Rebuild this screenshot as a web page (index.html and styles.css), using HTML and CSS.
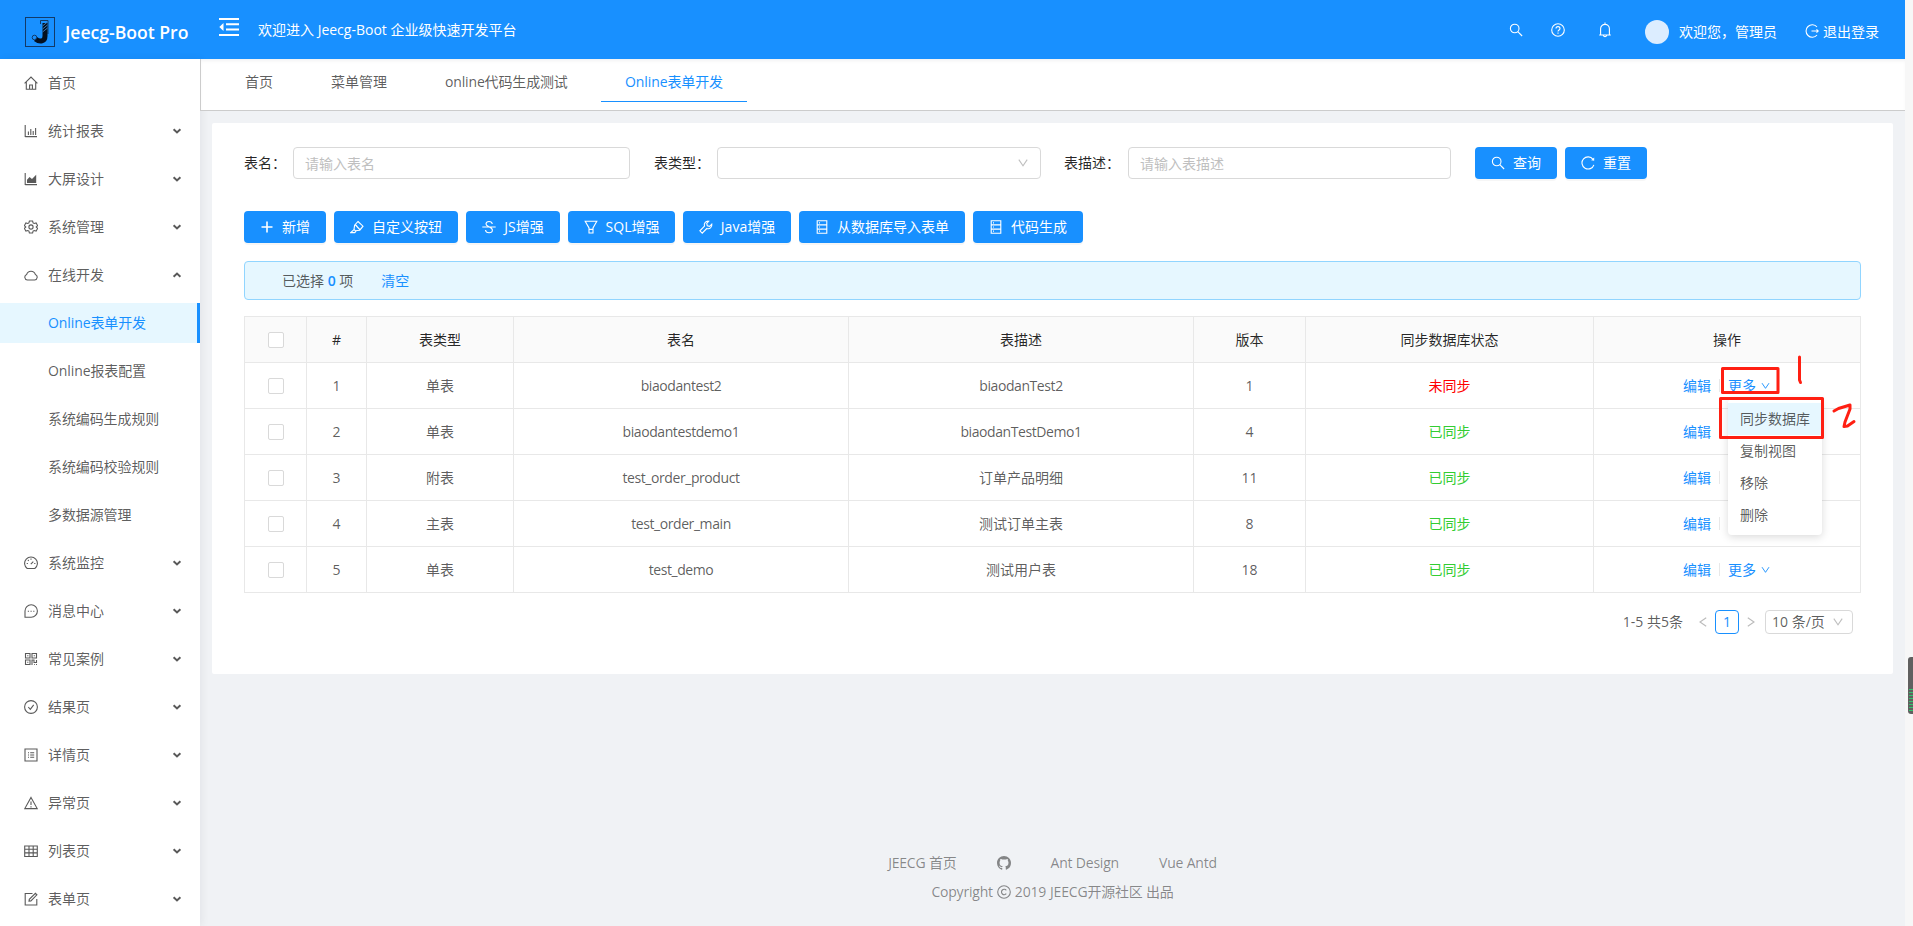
FILE: index.html
```html
<!DOCTYPE html>
<html lang="zh-CN">
<head>
    <meta charset="UTF-8">
    <meta name="viewport" content="width=device-width, initial-scale=1.0">
    <title>Online表单开发</title>
    <link rel="stylesheet" href="styles.css">
</head>
<body>
    <!-- icons -->
    <svg class="sprite">
        <symbol id="home" viewBox="0 0 14 14"><path d="M.6 7.4 7 1l6.4 6.4M2.3 6v7.3h9.4V6M5.6 13.2V9h2.8v4.2"/></symbol>
        <symbol id="bar" viewBox="0 0 14 14"><path d="M1.2 1v12M1.2 12.6H13M4.4 11V7.5M6.8 11V5M9.2 11V7M11.6 11V4"/></symbol>
        <symbol id="area" viewBox="0 0 14 14"><path d="M1.2 1v12M1.2 12.6H13"/><path class="solid" d="M3 11V7.8L5.6 5l2.4 2 4.2-4.2V11z"/></symbol>
        <symbol id="gear" viewBox="0 0 14 14"><path d="M5.4 1h3.2l.5 1.9 1.1.6 1.9-.5 1.5 2.6L12.200 7l1.4 1.4-1.500 2.600-1.900-.5-1.100.6-.5 1.900H5.400l-.5-1.900-1.100-.6-1.900.5L.4 8.400 1.800 7 .4 5.600 1.900 3l1.900.5 1.100-.6z"/><circle cx="7" cy="7" r="2.100"/></symbol>
        <symbol id="cloud" viewBox="0 0 14 14"><path d="M3.400 12a2.900 2.900 0 0 1-.7-5.600 4.500 4.500 0 0 1 8.600 0 2.900 2.900 0 0 1-.7 5.600z"/></symbol>
        <symbol id="dash" viewBox="0 0 14 14"><path d="M3.200 12.500a6.400 6.400 0 1 1 7.600 0zM6.800 8.200l2.500-2.600M7 2.600v1.200M3.900 4l.8.8M2.700 7.500h1.200M10.200 7.500h1.200"/></symbol>
        <symbol id="message" viewBox="0 0 14 14"><path d="M1 13V7a6.200 6.200 0 1 1 6.200 6.200H1zM3.800 7.200h1.200M6.500 7.200h1.200M9.200 7.200h1.200"/></symbol>
        <symbol id="qrcode" viewBox="0 0 14 14"><path d="M1.500 1.500h4.500v4.500h-4.500zM8 1.500h4.500v4.500H8zM1.500 8h4.500v4.500h-4.500zM8 13V8h2v2.500h2.500V8M10 12.500h.8M12 12.500h1M3.200 3.800h1.200M9.700 3.800h1.200M3.200 10.200h1.200"/></symbol>
        <symbol id="check" viewBox="0 0 14 14"><circle cx="7" cy="7" r="6.400"/><path d="M4.300 7l2 2.300 3.400-4.500"/></symbol>
        <symbol id="profile" viewBox="0 0 14 14"><path d="M1 1h12v12H1zM4 4.800h1M6.200 4.800h4M4 7h1M6.200 7h4M4 9.200h1M6.200 9.200h4"/></symbol>
        <symbol id="warning" viewBox="0 0 14 14"><path d="M7 1.400l6.200 11.200H.8zM7 5.400v3.600M7 10.200v1.200"/></symbol>
        <symbol id="table" viewBox="0 0 14 14"><path d="M.7 2h12.600v10.500H.7zM.7 5.300h12.600M.7 8.900h12.600M5 2v10.500M9.200 2v10.500"/></symbol>
        <symbol id="form" viewBox="0 0 14 14"><path d="M8.500 1.500H1.200v11.500h11.600V7M5 9.200l.3-1.900 6.100-6 1.500 1.500-6 6.100z"/></symbol>
        <symbol id="arrow" viewBox="0 0 10 8"><path d="M1.600 2.200 5 5.400l3.400-3.200"/></symbol>
        <symbol id="down" viewBox="0 0 12 12"><path d="M1.800 2.600 6 8.800l4.200-6.200"/></symbol>
        <symbol id="left" viewBox="0 0 12 12"><path d="M9.200 1.700 3 6l6.200 4.300"/></symbol>
        <symbol id="right" viewBox="0 0 12 12"><path d="M2.800 1.700 9 6l-6.200 4.300"/></symbol>
        <symbol id="fold" viewBox="0 0 20 18"><path d="M0 1h20M7 6.300h13M7 11.600h13M0 17h20"/><path class="solid" d="M4.500 5v8L.3 9z"/></symbol>
        <symbol id="search" viewBox="0 0 14 14"><circle cx="5.700" cy="5.500" r="4.300"/><path d="M8.800 8.600l4.300 4.400"/></symbol>
        <symbol id="help" viewBox="0 0 14 14"><circle cx="7" cy="7" r="6.300"/><path d="M5 5.600c0-2.600 4-2.600 4 0 0 1.400-2 1.300-2 3M7 9.600v1.100"/></symbol>
        <symbol id="bell" viewBox="0 0 14 16"><path d="M7 .5V2M1.200 13h11.600M2.600 13V6.800a4.400 4.400 0 0 1 8.800 0V13M5.300 13.400a1.800 1.800 0 0 0 3.400 0"/></symbol>
        <symbol id="logout" viewBox="0 0 14 14"><path d="M12 3a6.200 6.200 0 1 0 0 8M6.500 7h6.500M11.500 5.400 13.300 7l-1.800 1.600"/></symbol>
        <symbol id="reload" viewBox="0 0 14 14"><path d="M12 3.300a6.100 6.100 0 1 0 .9 5.500"/><path class="solid" d="M13.200 1.500v3.300l-3.100-.5z"/></symbol>
        <symbol id="plus" viewBox="0 0 14 14"><path d="M7 1.500v11M1.500 7h11"/></symbol>
        <symbol id="highlight" viewBox="0 0 14 14"><path d="M8 1.500l5 4.700-3.200 4-4.600.5L4 9.500l.6-4.300zM5.500 5l4.200 4.500M4 9.600.8 12.600h4l1.400-1.800M8 7.500 6 5"/></symbol>
        <symbol id="strike" viewBox="0 0 14 14"><path d="M.3 7h13.400M10.300 4C9.800.6 4.200.7 4 3.900 3.900 6.800 10.400 6.500 10.400 10c0 3.700-6.500 3.700-6.900 0"/></symbol>
        <symbol id="filter" viewBox="0 0 14 14"><path d="M1.200 1.200h11.600L9 8v5H5V8zM5 9.400h4"/></symbol>
        <symbol id="tool" viewBox="0 0 14 14"><path d="M9.800 1.200a3.800 3.800 0 0 0-4.300 5L.9 10.800l2.300 2.300L7.800 8.500a3.800 3.800 0 0 0 5-4.300l-2.200 2.100-2.300-.6-.6-2.300z"/></symbol>
        <symbol id="database" viewBox="0 0 14 14"><path d="M2.200.8h9.600v12.400H2.200zM2.200 4.900h9.600M2.200 9.100h9.600M4 2.900h1M4 7h1M4 11.100h1"/></symbol>
        <symbol id="github" viewBox="0 0 16 16"><path class="solid" d="M8 0C3.580 0 0 3.580 0 8c0 3.540 2.290 6.530 5.470 7.590.4.070.55-.17.55-.38v-1.490c-2.010.37-2.530-.49-2.690-.94-.09-.23-.48-.94-.82-1.130-.28-.15-.68-.52-.01-.53.63-.01 1.080.58 1.230.82.72 1.210 1.870.87 2.330.66.07-.52.28-.87.51-1.070-1.780-.2-3.640-.89-3.640-3.950 0-.87.31-1.590.82-2.150-.08-.2-.36-1.020.08-2.120 0 0 .67-.21 2.200.82a7.600 7.600 0 0 1 4 0c1.530-1.040 2.200-.82 2.200-.82.44 1.100.16 1.920.08 2.120.51.56.82 1.270.82 2.150 0 3.070-1.870 3.750-3.650 3.950.29.25.54.73.54 1.480v2.190c0 .21.15.46.55.38A8.010 8.010 0 0 0 16 8c0-4.420-3.580-8-8-8z"/></symbol>
        <symbol id="copyright" viewBox="0 0 14 14"><circle cx="7" cy="7" r="6.300"/><path d="M9.300 5.300a2.700 2.700 0 1 0 0 3.400"/></symbol>
    </svg>

    <div class="page">
        <div class="header">
            <div class="logo">
                <svg class="logo-img" viewBox="0 0 30 30">
                    <rect x=".5" y=".5" width="29" height="29"/>
                    <path class="j-top" d="M15.500 3.500h7.500V17M15.500 3.500v3.500"/>
                    <path class="j-body" d="M20 6v13c0 5.500-5 6.500-9.500 3"/>
                    <path class="j-line" d="M17.500 9l5-4M17.500 12l5-4M17.500 15l5-4"/>
                    <circle cx="9.500" cy="20.500" r="2.300"/>
                </svg>
                <h1>Jeecg-Boot Pro</h1>
            </div>
            <svg class="fold"><use href="#fold"/></svg>
            <span class="welcome">欢迎进入 Jeecg-Boot 企业级快速开发平台</span>
            <div class="user">
                <svg class="icon user-search"><use href="#search"/></svg>
                <svg class="icon user-help"><use href="#help"/></svg>
                <svg class="icon user-bell"><use href="#bell"/></svg>
                <span class="avatar"></span>
                <span class="hello">欢迎您，管理员</span>
                <svg class="icon user-logout"><use href="#logout"/></svg>
                <span>退出登录</span>
            </div>
        </div>

        <div class="layout">
            <div class="sidebar">
                <div class="item"><svg class="icon"><use href="#home"/></svg><span>首页</span></div>
                <div class="item"><svg class="icon"><use href="#bar"/></svg><span>统计报表</span><svg class="arrow"><use href="#arrow"/></svg></div>
                <div class="item"><svg class="icon"><use href="#area"/></svg><span>大屏设计</span><svg class="arrow"><use href="#arrow"/></svg></div>
                <div class="item"><svg class="icon"><use href="#gear"/></svg><span>系统管理</span><svg class="arrow"><use href="#arrow"/></svg></div>
                <div class="item"><svg class="icon"><use href="#cloud"/></svg><span>在线开发</span><svg class="arrow open"><use href="#arrow"/></svg></div>
                <div class="item sub active"><span>Online表单开发</span></div>
                <div class="item sub"><span>Online报表配置</span></div>
                <div class="item sub"><span>系统编码生成规则</span></div>
                <div class="item sub"><span>系统编码校验规则</span></div>
                <div class="item sub"><span>多数据源管理</span></div>
                <div class="item"><svg class="icon"><use href="#dash"/></svg><span>系统监控</span><svg class="arrow"><use href="#arrow"/></svg></div>
                <div class="item"><svg class="icon"><use href="#message"/></svg><span>消息中心</span><svg class="arrow"><use href="#arrow"/></svg></div>
                <div class="item"><svg class="icon"><use href="#qrcode"/></svg><span>常见案例</span><svg class="arrow"><use href="#arrow"/></svg></div>
                <div class="item"><svg class="icon"><use href="#check"/></svg><span>结果页</span><svg class="arrow"><use href="#arrow"/></svg></div>
                <div class="item"><svg class="icon"><use href="#profile"/></svg><span>详情页</span><svg class="arrow"><use href="#arrow"/></svg></div>
                <div class="item"><svg class="icon"><use href="#warning"/></svg><span>异常页</span><svg class="arrow"><use href="#arrow"/></svg></div>
                <div class="item"><svg class="icon"><use href="#table"/></svg><span>列表页</span><svg class="arrow"><use href="#arrow"/></svg></div>
                <div class="item"><svg class="icon"><use href="#form"/></svg><span>表单页</span><svg class="arrow"><use href="#arrow"/></svg></div>
            </div>

            <div class="main">
                <div class="tabs">
                    <div class="tab">首页</div>
                    <div class="tab">菜单管理</div>
                    <div class="tab tab-code">online代码生成测试</div>
                    <div class="tab tab-form active">Online表单开发</div>
                </div>

                <div class="card">
                    <div class="search-form">
                        <label class="label-name" for="tableName">表名：</label>
                        <input class="input-name" type="text" id="tableName" placeholder="请输入表名">
                        <label class="label-type">表类型：</label>
                        <div class="select"><svg class="icon-sm"><use href="#down"/></svg></div>
                        <label class="label-desc" for="tableTxt">表描述：</label>
                        <input class="input-desc" type="text" id="tableTxt" placeholder="请输入表描述">
                        <button class="btn-search"><svg class="icon"><use href="#search"/></svg>查询</button>
                        <button><svg class="icon"><use href="#reload"/></svg>重置</button>
                    </div>

                    <div class="operator">
                        <button class="w82"><svg class="icon plus"><use href="#plus"/></svg>新增</button>
                        <button class="w124"><svg class="icon"><use href="#highlight"/></svg>自定义按钮</button>
                        <button class="w94"><svg class="icon"><use href="#strike"/></svg>JS增强</button>
                        <button class="w107"><svg class="icon"><use href="#filter"/></svg>SQL增强</button>
                        <button class="w108"><svg class="icon"><use href="#tool"/></svg>Java增强</button>
                        <button class="w166"><svg class="icon"><use href="#database"/></svg>从数据库导入表单</button>
                        <button class="w110"><svg class="icon"><use href="#database"/></svg>代码生成</button>
                    </div>

                    <div class="alert">
                        <span>已选择 <b>0</b> 项</span>
                        <a>清空</a>
                    </div>

                    <table>
                        <colgroup>
                            <col class="c-check"><col class="c-index"><col class="c-type"><col class="c-name"><col class="c-desc"><col class="c-version"><col class="c-status"><col class="c-action">
                        </colgroup>
                        <tr>
                            <th><i class="checkbox"></i></th>
                            <th>#</th>
                            <th>表类型</th>
                            <th>表名</th>
                            <th>表描述</th>
                            <th>版本</th>
                            <th>同步数据库状态</th>
                            <th>操作</th>
                        </tr>
                        <tr>
                            <td><i class="checkbox"></i></td>
                            <td>1</td>
                            <td>单表</td>
                            <td class="en">biaodantest2</td>
                            <td class="en">biaodanTest2</td>
                            <td>1</td>
                            <td class="unsynced">未同步</td>
                            <td>
                                <div class="action">
                                    <a>编辑</a><i class="divider"></i><a>更多</a><svg class="icon-sm"><use href="#down"/></svg>
                                    <div class="dropdown">
                                        <div class="option hover">同步数据库</div>
                                        <div class="option">复制视图</div>
                                        <div class="option">移除</div>
                                        <div class="option">删除</div>
                                    </div>
                                    <svg class="marks" viewBox="0 0 180 90">
                                        <path d="M5.500 9.500h55.500v24h-55.500z"/>
                                        <path d="M3.500 39.500h102v39h-102z"/>
                                        <path d="M82.500-2v23l1 2.500"/>
                                        <path d="M117 52l4.500-2.500 11.500-3.500v4l-5 13-1 4.500 3.500-.5 6.500-4.500"/>
                                    </svg>
                                </div>
                            </td>
                        </tr>
                        <tr>
                            <td><i class="checkbox"></i></td>
                            <td>2</td>
                            <td>单表</td>
                            <td class="en">biaodantestdemo1</td>
                            <td class="en">biaodanTestDemo1</td>
                            <td>4</td>
                            <td class="synced">已同步</td>
                            <td><div class="action covered"><a>编辑</a><i class="divider"></i></div></td>
                        </tr>
                        <tr>
                            <td><i class="checkbox"></i></td>
                            <td>3</td>
                            <td>附表</td>
                            <td class="en">test_order_product</td>
                            <td>订单产品明细</td>
                            <td>11</td>
                            <td class="synced">已同步</td>
                            <td><div class="action covered"><a>编辑</a><i class="divider"></i></div></td>
                        </tr>
                        <tr>
                            <td><i class="checkbox"></i></td>
                            <td>4</td>
                            <td>主表</td>
                            <td class="en">test_order_main</td>
                            <td>测试订单主表</td>
                            <td>8</td>
                            <td class="synced">已同步</td>
                            <td><div class="action covered"><a>编辑</a><i class="divider"></i></div></td>
                        </tr>
                        <tr>
                            <td><i class="checkbox"></i></td>
                            <td>5</td>
                            <td>单表</td>
                            <td class="en">test_demo</td>
                            <td>测试用户表</td>
                            <td>18</td>
                            <td class="synced">已同步</td>
                            <td><div class="action"><a>编辑</a><i class="divider"></i><a>更多</a><svg class="icon-sm"><use href="#down"/></svg></div></td>
                        </tr>
                    </table>

                    <div class="pagination">
                        <span class="total">1-5 共5条</span>
                        <svg class="icon-sm prev"><use href="#left"/></svg>
                        <span class="current">1</span>
                        <svg class="icon-sm next"><use href="#right"/></svg>
                        <div class="page-size">10 条/页<svg class="icon-sm"><use href="#down"/></svg></div>
                    </div>
                </div>

                <div class="footer">
                    <div class="links">
                        <a>JEECG 首页</a>
                        <svg class="icon"><use href="#github"/></svg>
                        <a>Ant Design</a>
                        <a>Vue Antd</a>
                    </div>
                    <div class="copyright">Copyright <svg class="icon"><use href="#copyright"/></svg> 2019 <span>JEECG开源社区 出品</span></div>
                </div>
            </div>
        </div>
    </div>
    <div class="meter"></div>
</body>
</html>
```

FILE: styles.css
```css
* {
    box-sizing: border-box;
}
body {
    margin: 0;
    height: 926px;
    overflow: hidden;
    background: #f7f7f7;
    color: rgba(0, 0, 0, 0.65);
    font-family: "Open Sans", "Noto Sans CJK SC", sans-serif;
    font-size: 14px;
    line-height: 22px;
}
.sprite {
    display: none;
}
svg {
    fill: none;
    stroke: currentColor;
    stroke-width: 1.1;
    flex: none;
}
.solid {
    fill: currentColor;
    stroke: none;
}
.icon {
    width: 14px;
    height: 14px;
}
.icon-sm {
    width: 12px;
    height: 12px;
}
a {
    color: #1890ff;
}
.page {
    width: 1905px;
    height: 926px;
    overflow: hidden;
    display: flex;
    flex-direction: column;
    background: #f0f2f5;
}

/* header */
.header {
    height: 59px;
    flex: none;
    display: flex;
    align-items: center;
    background: #1890ff;
    color: #fff;
}
.logo {
    width: 219px;
    padding: 5px 0 0 25px;
    display: flex;
    align-items: center;
}
.logo-img {
    width: 30px;
    height: 30px;
    stroke: #123a68;
    stroke-width: 1;
}
.j-body {
    stroke: #04101f;
    stroke-width: 5;
}
.j-line {
    stroke: #3a78b8;
}
.logo h1 {
    margin: 0 0 0 10px;
    font-size: 17.6px;
    font-weight: 600;
    white-space: nowrap;
}
.fold {
    width: 20px;
    height: 18px;
    margin-bottom: 5px;
    stroke-width: 2;
}
.welcome {
    margin: 0 0 0 19px;
    padding-top: 1px;
}
.user {
    margin-left: auto;
    padding: 4px 26px 0 0;
    display: flex;
    align-items: center;
}
.user-search, .user-help, .user-bell {
    margin: 0 28px 4px 0;
}
.user-bell {
    height: 16px;
    margin-left: 5px;
    margin-right: 33px;
}
.avatar {
    width: 24px;
    height: 24px;
    margin-right: 10px;
    border-radius: 50%;
    background: #dcedff;
}
.hello {
    margin-right: 28px;
}
.user-logout {
    margin: 0 4px 2px 0;
}

.layout {
    flex: 1;
    min-height: 0;
    display: flex;
}

/* left menu */
.sidebar {
    width: 200px;
    flex: none;
    padding-top: 4px;
    background: #fff;
    box-shadow: 2px 0 8px rgba(0, 21, 41, 0.06);
    overflow: hidden;
    position: relative;
}
.item {
    height: 40px;
    margin-bottom: 8px;
    padding: 0 18px 0 24px;
    display: flex;
    align-items: center;
}
.item .icon {
    margin-right: 10px;
}
.arrow {
    width: 10px;
    height: 8px;
    margin-left: auto;
    stroke-width: 2;
}
.arrow.open {
    transform: rotate(180deg);
}
.sub {
    padding-left: 48px;
    letter-spacing: -0.1px;
}
.sub.active {
    background: #e6f7ff;
    color: #1890ff;
    border-right: 3px solid #1890ff;
}

/* tabs */
.main {
    flex: 1;
    display: flex;
    flex-direction: column;
}
.tabs {
    height: 52px;
    padding-left: 20px;
    display: flex;
    gap: 10px;
    background: #fff;
    border-left: 1px solid #ccc;
    border-bottom: 1px solid #ccc;
    box-shadow: inset 0 3px 4px -2px rgba(0, 21, 41, 0.08);
    position: relative;
}
.tab {
    height: 43px;
    padding: 12px 24px 0;
    white-space: nowrap;
}
.tab.active {
    color: #1890ff;
    border-bottom: 1px solid #1890ff;
}
.tab-code {
    width: 170px;
    letter-spacing: -0.15px;
}
.tab-form {
    width: 146px;
    letter-spacing: -0.1px;
}

/* content */
.card {
    width: 1681px;
    height: 551px;
    margin: 12px 0 0 12px;
    padding: 24px 32px;
    background: #fff;
    border-radius: 2px;
}
.search-form {
    display: flex;
    align-items: center;
    color: rgba(0, 0, 0, 0.85);
    height: 32px;
}
.label-name {
    width: 49px;
}
.label-type {
    width: 63px;
    margin-left: 24px;
}
.label-desc {
    width: 64px;
    margin-left: 23px;
}
label {
    white-space: nowrap;
}
input {
    height: 32px;
    padding: 0 11px;
    border: 1px solid #d9d9d9;
    border-radius: 4px;
    font: inherit;
}
input::placeholder {
    color: #bfbfbf;
}
.input-name {
    width: 337px;
}
.input-desc {
    width: 323px;
}
.select {
    width: 324px;
    height: 32px;
    padding-right: 11px;
    display: flex;
    align-items: center;
    justify-content: flex-end;
    border: 1px solid #d9d9d9;
    border-radius: 4px;
    color: #bfbfbf;
}
button {
    width: 82px;
    height: 32px;
    padding: 0;
    display: flex;
    align-items: center;
    justify-content: center;
    gap: 8px;
    background: #1890ff;
    color: #fff;
    border: none;
    border-radius: 4px;
    font: inherit;
    white-space: nowrap;
    box-shadow: 0 2px 0 rgba(0, 0, 0, 0.035);
}
.btn-search {
    margin: 0 8px 0 24px;
}
.operator {
    margin-top: 32px;
    display: flex;
    gap: 8px;
}
.plus {
    stroke-width: 1.6;
}
.w82 { width: 82px; }
.w124 { width: 124px; }
.w94 { width: 94px; }
.w107 { width: 107px; }
.w108 { width: 108px; }
.w166 { width: 166px; }
.w110 { width: 110px; }
.alert {
    height: 39px;
    margin-top: 18px;
    padding: 0 37px;
    display: flex;
    align-items: center;
    gap: 28px;
    background: #e6f7ff;
    border: 1px solid #91d5ff;
    border-radius: 4px;
}
.alert b {
    color: #1890ff;
    font-weight: 600;
}

/* table */
table {
    width: 1617px;
    margin-top: 16px;
    table-layout: fixed;
    border-collapse: separate;
    border-spacing: 0;
    border-top: 1px solid #e8e8e8;
    border-left: 1px solid #e8e8e8;
}
.c-check { width: 62px; }
.c-index { width: 60px; }
.c-type { width: 147px; }
.c-name { width: 335px; }
.c-desc { width: 345px; }
.c-version { width: 112px; }
.c-status { width: 288px; }
.c-action { width: 267px; }
th, td {
    height: 46px;
    padding: 0;
    text-align: center;
    border-right: 1px solid #e8e8e8;
    border-bottom: 1px solid #e8e8e8;
}
th {
    background: #fafafa;
    color: rgba(0, 0, 0, 0.85);
    font-weight: 400;
}
.en {
    letter-spacing: -0.42px;
}
.checkbox {
    width: 16px;
    height: 16px;
    display: block;
    margin: 0 auto;
    background: #fff;
    border: 1px solid #d9d9d9;
    border-radius: 2px;
}
.unsynced {
    color: #f00;
}
.synced {
    color: #32cd32;
}
.action {
    display: flex;
    align-items: center;
    justify-content: center;
    color: #1890ff;
    position: relative;
}
.action.covered {
    padding-right: 43px;
}
.action.covered .divider {
    margin-right: 8px;
}
.action > .icon-sm {
    margin-left: 4px;
    width: 11px;
    height: 10px;
}
.divider {
    width: 1px;
    height: 13px;
    margin: 0 8px;
    background: #e8e8e8;
}
.dropdown {
    position: absolute;
    left: 134px;
    top: 24px;
    z-index: 2;
    width: 94px;
    padding: 4px 0;
    background: #fff;
    border-radius: 4px;
    box-shadow: 0 2px 8px rgba(0, 0, 0, 0.15);
    color: rgba(0, 0, 0, 0.65);
    text-align: left;
}
.option {
    height: 32px;
    padding: 5px 12px;
}
.option.hover {
    background: #e6f7ff;
}
/* hand drawn marks over the action menu */
.marks {
    position: absolute;
    left: 123px;
    top: -16px;
    z-index: 3;
    width: 180px;
    height: 90px;
    overflow: visible;
    stroke: #ff1f12;
    stroke-width: 3;
    stroke-linejoin: round;
    stroke-linecap: round;
}

.pagination {
    margin-top: 17px;
    padding-right: 8px;
    display: flex;
    align-items: center;
    justify-content: flex-end;
}
.prev {
    margin: 0 6px 0 14px;
    color: #bbb;
}
.next {
    margin: 0 8px 0 6px;
    color: #bbb;
}
.current {
    width: 24px;
    height: 24px;
    text-align: center;
    color: #1890ff;
    border: 1px solid #1890ff;
    border-radius: 4px;
}
.page-size {
    width: 88px;
    height: 24px;
    padding: 0 8px 0 6px;
    display: flex;
    align-items: center;
    justify-content: space-between;
    border: 1px solid #d9d9d9;
    border-radius: 4px;
    white-space: nowrap;
}
.page-size .icon-sm {
    color: #bfbfbf;
}

/* footer */
.footer {
    margin-top: auto;
    padding-bottom: 23px;
    color: rgba(0, 0, 0, 0.45);
    letter-spacing: -0.2px;
}
.footer a {
    color: inherit;
}
.links {
    display: flex;
    align-items: center;
    justify-content: center;
    gap: 40px;
    margin-bottom: 7px;
}
.copyright {
    display: flex;
    align-items: center;
    justify-content: center;
    gap: 4px;
}

/* memory meter at the right edge */
.meter {
    position: absolute;
    right: 0;
    top: 657px;
    width: 5px;
    height: 57px;
    border: solid #606060;
    border-width: 32px 0 3px 1px;
    border-radius: 3px 0 0 3px;
    background: repeating-linear-gradient(#36c26e 0 1px, #606060 1px 3px);
}
```
